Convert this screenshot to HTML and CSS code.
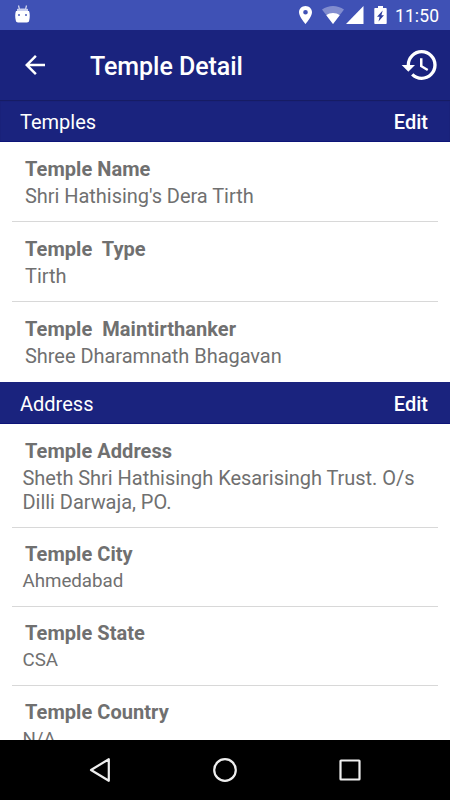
FILE: index.html
```html
<!DOCTYPE html>
<html lang="en">
<head>
    <meta charset="UTF-8">
    <meta name="viewport" content="width=device-width, initial-scale=1.0">
    <title>Temple Detail</title>
    <link rel="stylesheet" href="styles.css">
</head>
<body>
    <div class="status-bar">
        <svg class="debug-icon" width="15" height="18" viewBox="0 0 15 18">
            <path d="M3.500 0.500l1 4M11.500 0.500l-1 4" stroke="#fff" stroke-opacity=".8" stroke-width="1.200"/>
            <path d="M2 4C3.500 3.200 11.500 3.200 13 4V6.500H2z" fill="#c9cfee"/>
            <path d="M1 6h13c1 2.500 1 6.500 .2 9.500-.3 1.400-1 1.900-2.200 1.900H3c-1.200 0-1.900-.5-2.200-1.900C0 12.500 0 8.500 1 6z" fill="#fff"/>
            <path d="M3 9h2v2H3zM10 9h2v2h-2z" fill="#7986cb"/>
        </svg>
        <div class="status-icons">
            <svg width="13" height="18" viewBox="5 2 14 20" preserveAspectRatio="none" fill="#fff">
                <path d="M12 2C8.130 2 5 5.130 5 9c0 5.250 7 13 7 13s7-7.750 7-13c0-3.870-3.130-7-7-7zm0 9.500a2.500 2.500 0 0 1 0-5 2.500 2.500 0 0 1 0 5z"/>
            </svg>
            <svg class="wifi-icon" width="22" height="18" viewBox="0 0 22 18" fill="#fff">
                <path d="M0 3.600C6.500-1.200 15.500-1.200 22 3.600L11 18z" fill-opacity=".35"/>
                <path d="M4.300 9.200C8 6.100 14 6.100 17.700 9.200L11 18z"/>
            </svg>
            <svg class="signal-icon" width="18" height="18" viewBox="0 0 18 18" fill="#fff">
                <path d="M17.500 0v18H0z"/>
            </svg>
            <svg class="battery-icon" width="13" height="18" viewBox="0 0 13 18">
                <path d="M4 0h5v2h2.700c.6 0 1 .4 1 1v14c0 .6-.4 1-1 1H1.300c-.6 0-1-.4-1-1V3c0-.6.4-1 1-1H4z" fill="#fff"/>
                <path d="M8.700 4.500L3 10.700h2.600L4.500 15.500l5.500-6.200H7.400z" fill="#303f9f"/>
            </svg>
            <span class="clock">11:50</span>
        </div>
    </div>

    <div class="toolbar">
        <svg width="30" height="30" viewBox="0 0 24 24" fill="#fff">
            <path d="M20 11H7.830l5.590-5.590L12 4l-8 8 8 8 1.410-1.410L7.830 13H20v-2z"/>
        </svg>
        <h1 class="title">Temple Detail</h1>
        <svg width="40" height="40" viewBox="0 0 24 24" fill="#fff">
            <path d="M13 3a9 9 0 0 0-9 9H1l3.890 3.890.07.14L9 12H6c0-3.870 3.130-7 7-7s7 3.130 7 7-3.130 7-7 7c-1.930 0-3.680-.79-4.940-2.060l-1.420 1.420A8.950 8.950 0 0 0 13 21a9 9 0 0 0 0-18zm-1 5v5l4.280 2.540.72-1.210-3.500-2.080V8H12z"/>
        </svg>
    </div>

    <div class="content">
        <div class="section-header first">
            <span>Temples</span>
            <span class="edit">Edit</span>
        </div>
        <div class="item">
            <div class="label">Temple Name</div>
            <div class="value">Shri Hathising's Dera Tirth</div>
        </div>
        <div class="item">
            <div class="label">Temple  Type</div>
            <div class="value">Tirth</div>
        </div>
        <div class="item last">
            <div class="label">Temple  Maintirthanker</div>
            <div class="value">Shree Dharamnath Bhagavan</div>
        </div>

        <div class="section-header">
            <span>Address</span>
            <span class="edit">Edit</span>
        </div>
        <div class="item address">
            <div class="label">Temple Address</div>
            <div class="value">Sheth Shri Hathisingh Kesarisingh Trust. O/s Dilli Darwaja, PO.</div>
        </div>
        <div class="item address small">
            <div class="label">Temple City</div>
            <div class="value">Ahmedabad</div>
        </div>
        <div class="item address small">
            <div class="label">Temple State</div>
            <div class="value">CSA</div>
        </div>
        <div class="item address small">
            <div class="label">Temple Country</div>
            <div class="value">N/A</div>
        </div>
    </div>

    <div class="nav-bar">
        <svg width="26" height="26" viewBox="0 0 26 26">
            <path d="M21.800 2.200v21.600L4 13z"/>
        </svg>
        <svg width="26" height="26" viewBox="0 0 26 26">
            <circle cx="13" cy="13" r="10.800"/>
        </svg>
        <svg width="26" height="26" viewBox="0 0 26 26">
            <rect x="3.500" y="3.500" width="19" height="19" rx="0.500"/>
        </svg>
    </div>
</body>
</html>
```
FILE: styles.css
```css
* {
    box-sizing: border-box;
}

body {
    font-family: Roboto, sans-serif;
    background-color: #ffffff;
    color: #707070;
    margin: 0;
    height: 100vh;
    display: flex;
    flex-direction: column;
    overflow: hidden;
}

svg {
    display: block;
    flex-shrink: 0;
}

.status-bar {
    height: 30px;
    flex-shrink: 0;
    display: flex;
    justify-content: space-between;
    align-items: center;
    padding: 0 10px 0 15px;
    background-color: #3f51b5;
    color: #ffffff;
}

.debug-icon {
    margin-bottom: 3px;
}

.status-icons {
    display: flex;
    align-items: center;
}

.wifi-icon {
    margin-left: 10px;
}

.signal-icon {
    margin-left: 2px;
}

.battery-icon {
    margin-left: 10px;
}

.clock {
    width: 45px;
    margin-left: 8px;
    padding-top: 2px;
    font-size: 17.5px;
    line-height: 20px;
    font-weight: 400;
    letter-spacing: 0.1px;
}

.toolbar {
    height: 70px;
    flex-shrink: 0;
    display: flex;
    align-items: center;
    padding: 0 10px 0 20px;
    background-color: #1a237e;
    color: #ffffff;
}

.title {
    flex: 1;
    margin: 0 0 0 40px;
    padding-top: 3px;
    font-size: 25px;
    line-height: 30px;
    font-weight: 500;
    letter-spacing: -0.05px;
}

.content {
    flex: 1;
    min-height: 0;
    overflow: hidden;
}

.section-header {
    height: 42px;
    display: flex;
    justify-content: space-between;
    align-items: center;
    padding: 2px 22px 0 20px;
    background-color: #1a237e;
    border-bottom: 1px solid #0d1478;
    color: #ffffff;
    font-size: 20px;
}

.section-header.first {
    box-shadow: inset 0 1px 1px #171c62;
}

.edit {
    font-weight: 500;
}

.item {
    margin: 0 12px;
    padding: 15px 13px 13px;
    border-bottom: 1px solid #d8d8d8;
    font-size: 20px;
    line-height: 24px;
}

.item.last {
    border-bottom: none;
    padding-bottom: 14px;
}

.label {
    font-weight: 700;
    letter-spacing: 0.05px;
    white-space: pre;
}

.value {
    margin-top: 3px;
    letter-spacing: -0.04px;
}

.address .value {
    margin-left: -2.5px;
}

.address.small {
    padding-top: 14px;
}

.small .value {
    margin-top: 4px;
    font-size: 18.75px;
    line-height: 22.75px;
}

.nav-bar {
    height: 60px;
    flex-shrink: 0;
    display: flex;
    justify-content: center;
    align-items: center;
    gap: 99px;
    background-color: #000000;
}

.nav-bar svg {
    fill: none;
    stroke: #eeeeee;
    stroke-width: 2.2;
    stroke-linejoin: round;
}
```
